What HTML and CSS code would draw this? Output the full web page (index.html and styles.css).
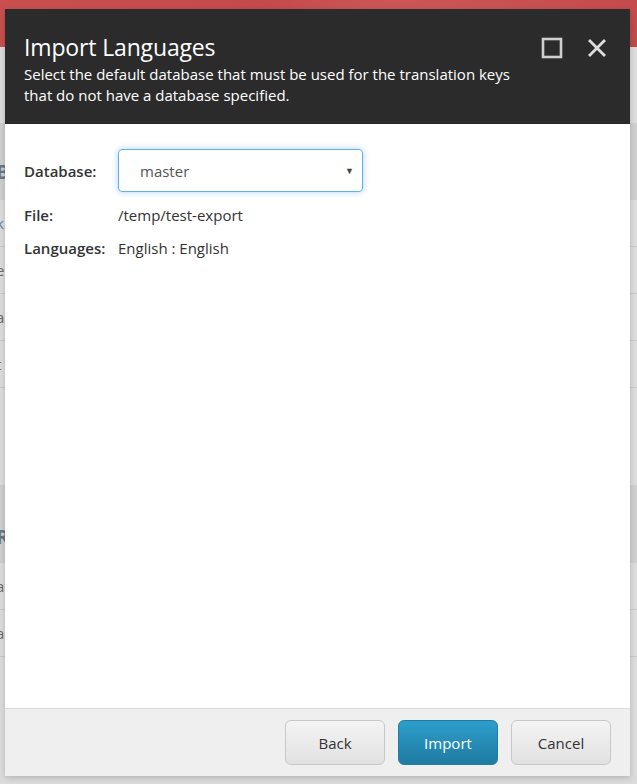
FILE: index.html
```html
<!DOCTYPE html>
<html lang="en">
<head>
<meta charset="utf-8">
<title>Import Languages</title>
<link rel="stylesheet" href="styles.css">
</head>
<body>
<div class="page">
  <div class="topbar"></div>
  <div class="content">
    <div class="panel">
      <div class="panel-head">B</div>
      <div class="row link">k</div>
      <div class="row">e</div>
      <div class="row">a</div>
      <div class="row">t</div>
    </div>
    <div class="panel second">
      <div class="panel-head">R</div>
      <div class="row">a</div>
      <div class="row">a</div>
    </div>
  </div>
</div>

<div class="dialog">
  <div class="dialog-header">
    <div class="titles">
      <h1 class="title">Import Languages</h1>
      <p class="subtitle">Select the default database that must be used for the translation keys that do not have a database specified.</p>
    </div>
    <div class="window-buttons">
      <svg class="icon" width="22" height="22" viewBox="0 0 22 22"><rect x="2" y="2" width="18" height="18" fill="none" stroke="#cfcfcf" stroke-width="2.6"/></svg>
      <svg class="icon" width="22" height="22" viewBox="0 0 22 22"><path d="M3 3 L19 19 M19 3 L3 19" stroke="#dedede" stroke-width="2.8" fill="none"/></svg>
    </div>
  </div>
  <div class="dialog-body">
    <div class="form">
      <div class="label">Database:</div>
      <div class="select"><span>master</span><span class="arrow">&#9660;</span></div>
      <div class="label">File:</div>
      <div class="value">/temp/test-export</div>
      <div class="label">Languages:</div>
      <div class="value">English : English</div>
    </div>
  </div>
  <div class="dialog-footer">
    <button class="btn">Back</button>
    <button class="btn primary">Import</button>
    <button class="btn">Cancel</button>
  </div>
</div>
</body>
</html>
```

FILE: styles.css
```css
html, body {
  margin: 0;
  padding: 0;
  height: 100%;
}
body {
  font-family: "Open Sans", "Noto Sans", sans-serif;
  background: #d9d9d9;
  overflow: hidden;
}
.page {
  height: 784px;
  background: #dcdcdc;
}
.topbar {
  height: 47px;
  background: linear-gradient(120deg, #c94f4f 0%, #c44b4b 40%, #cc5656 60%, #c34a4a 100%);
}
.content {
  padding: 76px 0 0 0;
}
.panel {
  margin-left: -4px;
}
.panel-head {
  height: 77px;
  background: #cfcfcf;
  font-weight: 700;
  font-size: 20px;
  color: #6a7783;
  line-height: 98px;
}
.row {
  height: 46px;
  border-bottom: 1px solid #c9c9c9;
  font-size: 15px;
  color: #6a6a6a;
  line-height: 46px;
}
.row.link { color: #5b84a8; }
.second {
  margin-top: 97px;
}
.second .panel-head {
  height: 78px;
  line-height: 104px;
}

.dialog {
  position: absolute;
  left: 5px;
  top: 9px;
  width: 625px;
  height: 767px;
  display: flex;
  flex-direction: column;
  background: #fff;
  box-shadow: 0 2px 6px rgba(0,0,0,0.18);
}
.dialog-header {
  height: 115px;
  box-sizing: border-box;
  background: #2b2b2b;
  color: #fff;
  display: flex;
  justify-content: space-between;
  padding: 23px 22px 0 19px;
}
.title {
  margin: 0;
  font-size: 23px;
  font-weight: 400;
  line-height: 30px;
  letter-spacing: -0.15px;
}
.subtitle {
  margin: 2px 0 0 0;
  font-size: 15px;
  line-height: 21px;
  width: 510px;
}
.window-buttons {
  display: flex;
  gap: 23px;
  padding-top: 5px;
}
.icon { display: block; }

.dialog-body {
  flex: 1;
  padding: 25px 19px;
}
.form {
  display: grid;
  grid-template-columns: 94px 245px;
  row-gap: 13px;
  align-items: center;
  font-size: 15px;
  color: #333;
}
.label {
  font-weight: 600;
  line-height: 20px;
}
.value {
  line-height: 20px;
  color: #333;
}
.select {
  height: 43px;
  box-sizing: border-box;
  border: 1px solid #66afe9;
  border-radius: 4px;
  box-shadow: 0 0 6px rgba(102,175,233,0.55);
  display: flex;
  align-items: center;
  justify-content: space-between;
  padding: 0 8px 0 21px;
  color: #555;
  font-size: 15px;
}
.arrow {
  font-size: 9px;
  color: #444;
}
.dialog-footer {
  height: 68px;
  box-sizing: border-box;
  background: #efefef;
  border-top: 1px solid #dcdcdc;
  display: flex;
  justify-content: flex-end;
  align-items: flex-start;
  gap: 13px;
  padding: 11px 19px 0 0;
}
.btn {
  width: 100px;
  height: 45px;
  border: 1px solid #c8c8c8;
  border-radius: 6px;
  background: linear-gradient(#f4f4f4, #e1e1e1);
  font-family: "Open Sans", "Noto Sans", sans-serif;
  font-size: 15px;
  color: #333;
  padding: 0;
}
.btn.primary {
  border-color: #1f7da3;
  background: linear-gradient(#2d9ecb, #1f7ba2);
  color: #fff;
}
```
